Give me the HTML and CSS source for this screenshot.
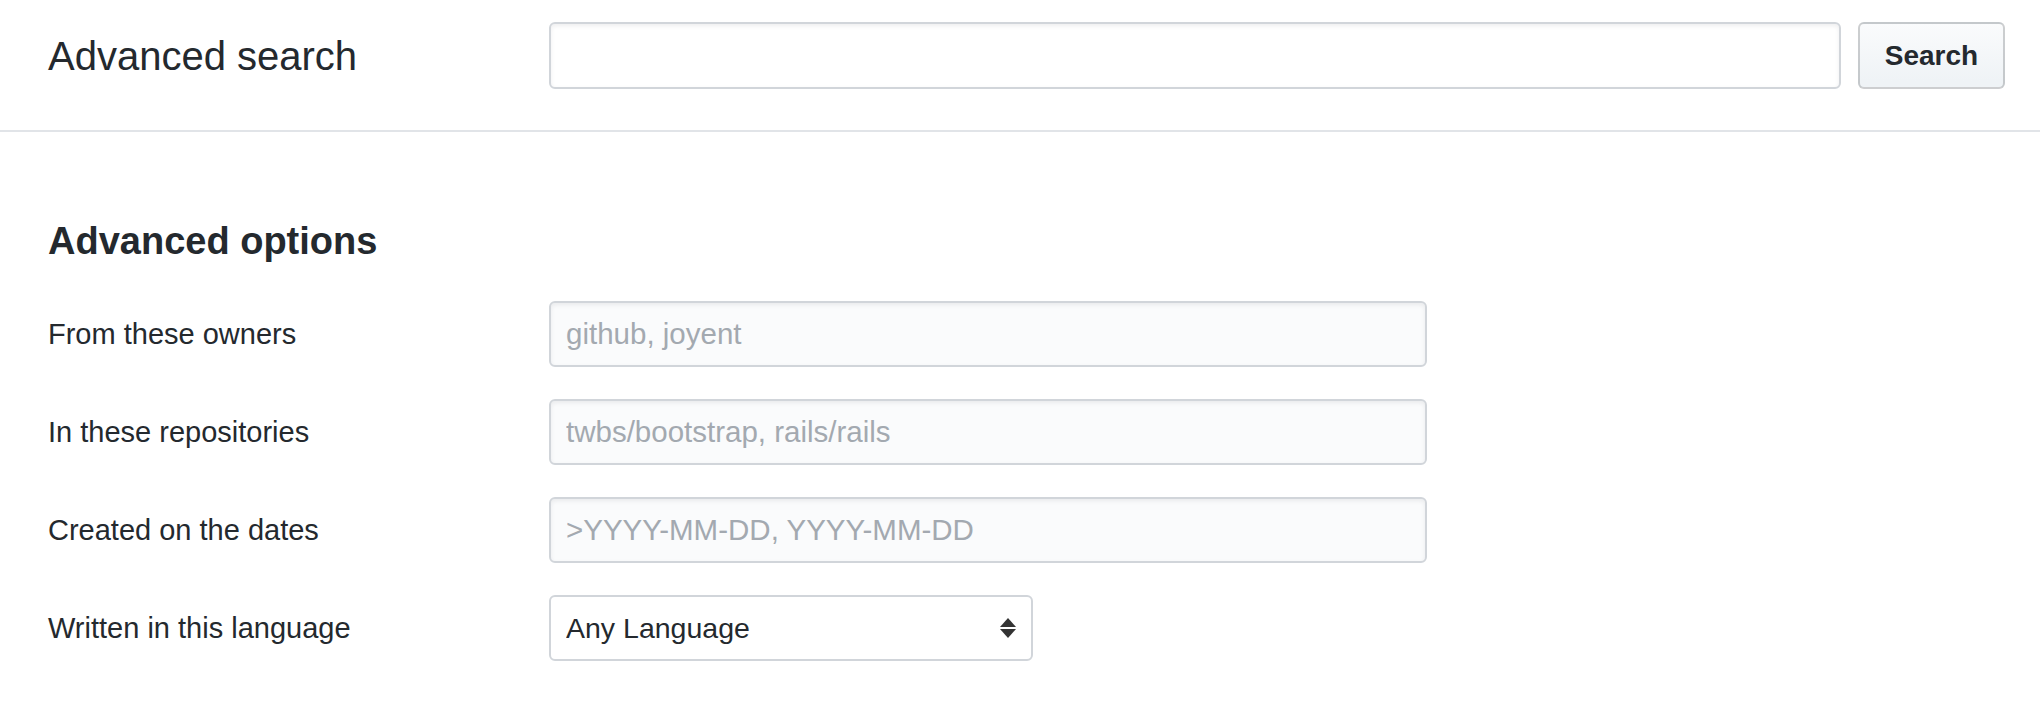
FILE: index.html
```html
<!DOCTYPE html>
<html lang="en">
<head>
<meta charset="utf-8">
<title>Advanced search</title>
<link rel="stylesheet" href="styles.css">
</head>
<body>
<header class="search-header">
  <h1 class="title">Advanced search</h1>
  <div class="search-bar">
    <input class="search-input" type="text" aria-label="Search">
    <button class="btn" type="button">Search</button>
  </div>
</header>
<main class="options">
  <h2 class="options-title">Advanced options</h2>
  <div class="form-row">
    <label class="form-label">From these owners</label>
    <input class="form-input" type="text" placeholder="github, joyent">
  </div>
  <div class="form-row">
    <label class="form-label">In these repositories</label>
    <input class="form-input" type="text" placeholder="twbs/bootstrap, rails/rails">
  </div>
  <div class="form-row">
    <label class="form-label">Created on the dates</label>
    <input class="form-input" type="text" placeholder="&gt;YYYY-MM-DD, YYYY-MM-DD">
  </div>
  <div class="form-row">
    <label class="form-label">Written in this language</label>
    <div class="select-wrap">
      <select class="form-select">
        <option>Any Language</option>
      </select>
      <svg class="select-arrows" width="16" height="20" viewBox="0 0 16 20" aria-hidden="true">
        <polygon points="8,0 16,9 0,9" fill="#333"/>
        <polygon points="0,11 16,11 8,20" fill="#333"/>
      </svg>
    </div>
  </div>
</main>
</body>
</html>
```
FILE: styles.css
```css
* {
  box-sizing: border-box;
}

html, body {
  margin: 0;
  padding: 0;
  background: #ffffff;
}

body {
  font-family: "Liberation Sans", Arial, Helvetica, sans-serif;
  color: #24292e;
}

.search-header {
  display: flex;
  align-items: center;
  padding: 22px 35px 41px 48px;
  border-bottom: 2px solid #e1e4e8;
}

.title {
  width: 501px;
  flex: none;
  margin: 0;
  font-size: 40px;
  font-weight: 400;
  line-height: 40px;
}

.search-bar {
  flex: 1;
  display: flex;
  align-items: center;
  gap: 17px;
}

.search-input {
  flex: 1;
  height: 67px;
  border: 2px solid #d1d5da;
  border-radius: 6px;
  background: #ffffff;
  box-shadow: inset 0 2px 4px rgba(27, 31, 35, 0.075);
  font-family: inherit;
  font-size: 29px;
  padding: 0 15px;
  outline: none;
}

.btn {
  width: 147px;
  height: 67px;
  border: 2px solid rgba(27, 31, 35, 0.2);
  border-radius: 6px;
  background: linear-gradient(180deg, #fafbfc 0%, #eff3f6 90%);
  font-family: inherit;
  font-size: 28px;
  font-weight: 700;
  color: #24292e;
  padding: 0;
}

.options {
  padding: 90px 48px 0 48px;
}

.options-title {
  margin: 0 0 41px 0;
  font-size: 38px;
  font-weight: 700;
  line-height: 38px;
}

.form-row {
  display: flex;
  align-items: center;
  margin-bottom: 32px;
}

.form-label {
  width: 501px;
  flex: none;
  font-size: 29px;
  line-height: 34px;
}

.form-input {
  width: 878px;
  height: 66px;
  border: 2px solid #d1d5da;
  border-radius: 6px;
  background: #fafbfc;
  box-shadow: inset 0 2px 4px rgba(27, 31, 35, 0.075);
  font-family: inherit;
  font-size: 29.5px;
  color: #24292e;
  padding: 0 15px;
  outline: none;
}

.form-input::placeholder {
  color: #a3a9b0;
  opacity: 1;
}

.select-wrap {
  position: relative;
  width: 484px;
  height: 66px;
}

.form-select {
  appearance: none;
  -webkit-appearance: none;
  width: 100%;
  height: 100%;
  border: 2px solid #d1d5da;
  border-radius: 6px;
  background: #ffffff;
  font-family: inherit;
  font-size: 28.5px;
  color: #24292e;
  padding: 0 48px 0 15px;
  outline: none;
}

.select-arrows {
  position: absolute;
  right: 17px;
  top: 23px;
  pointer-events: none;
}
```
